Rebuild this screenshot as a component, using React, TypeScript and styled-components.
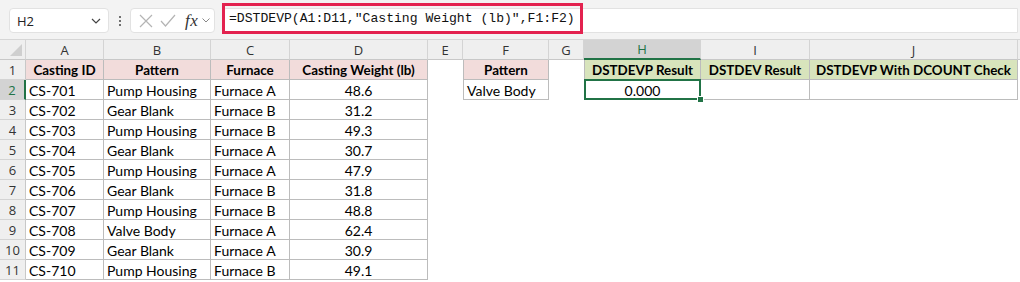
import styled, { createGlobalStyle } from 'styled-components';

const GlobalStyle = createGlobalStyle`
  html, body {
    margin: 0;
    padding: 0;
    background: #ffffff;
  }
  body {
    width: 1020px;
    height: 282px;
    overflow: hidden;
    font-family: "Lato", "Liberation Sans", sans-serif;
  }
`;

const GREEN = '#217346';
const LINE = '#bcbcbc';

const TopBar = styled.div`
  height: 40px;
  box-sizing: border-box;
  background: #f3f3f3;
  display: flex;
  align-items: flex-start;
  padding: 8px 2px 0 9px;
  border-bottom: 1px solid #d6d6d6;
`;

const Box = styled.div<{ $w?: number }>`
  height: 25px;
  width: ${p => (p.$w ? `${p.$w}px` : 'auto')};
  flex: ${p => (p.$w ? '0 0 auto' : '1 1 auto')};
  box-sizing: border-box;
  background: #ffffff;
  border: 1px solid #e2e2e2;
  border-radius: 4px;
  display: flex;
  align-items: center;
`;

const NameText = styled.span`
  font-family: "Open Sans", "Noto Sans", sans-serif;
  font-size: 13px;
  color: #222;
  padding-left: 7px;
  flex: 1;
`;

const Dots = styled.div`
  width: 21px;
  display: flex;
  flex-direction: column;
  align-items: center;
  justify-content: center;
  gap: 2px;
  height: 25px;
  span {
    width: 2px;
    height: 2px;
    background: #444;
    border-radius: 1px;
  }
`;

const Fx = styled.span`
  font-family: "Liberation Serif", serif;
  font-style: italic;
  font-size: 17px;
  color: #333;
  margin-left: 9px;
  letter-spacing: 0.5px;
`;

const FormulaBox = styled(Box)`
  margin-left: 7px;
  align-items: flex-start;
  overflow: visible;
  border-radius: 4px 0 0 4px;
`;

const Highlight = styled.div`
  margin-top: -6px;
  margin-left: -1px;
  height: 31px;
  box-sizing: border-box;
  border: 3px solid #e3224f;
  display: flex;
  align-items: center;
  padding: 0 5px 0 4px;
  font-family: "Liberation Mono", monospace;
  font-size: 13.1px;
  color: #111;
  white-space: pre;
`;

const Sheet = styled.div`
  display: grid;
  grid-template-columns: 26px 78px 107px 79px 138px 35px 86px 35px 117px 109px 208px 1fr;
  grid-auto-rows: 20px;
`;

const Corner = styled.div`
  background: #efefef;
  border-right: 1px solid #d4d4d4;
  border-bottom: 1px solid #c8c8c8;
  position: relative;
  box-sizing: border-box;
  &::after {
    content: '';
    position: absolute;
    right: 3px;
    bottom: 3px;
    border-left: 12px solid transparent;
    border-bottom: 12px solid #cfcfcf;
  }
`;

const ColHead = styled.div<{ $active?: boolean }>`
  box-sizing: border-box;
  background: ${p => (p.$active ? '#d3d3d3' : '#efefef')};
  color: ${p => (p.$active ? GREEN : '#333')};
  border-right: 1px solid #d4d4d4;
  border-bottom: ${p => (p.$active ? `2px solid ${GREEN}` : '1px solid #c8c8c8')};
  font-family: "Open Sans", "Noto Sans", sans-serif;
  font-size: 13px;
  display: flex;
  align-items: center;
  justify-content: center;
`;

const RowHead = styled.div<{ $active?: boolean }>`
  box-sizing: border-box;
  background: ${p => (p.$active ? '#d3d3d3' : '#efefef')};
  color: ${p => (p.$active ? GREEN : '#333')};
  border-right: ${p => (p.$active ? `2px solid ${GREEN}` : '1px solid #c8c8c8')};
  border-bottom: 1px solid #d4d4d4;
  font-family: "Open Sans", "Noto Sans", sans-serif;
  font-size: 13px;
  display: flex;
  align-items: center;
  justify-content: center;
`;

const Cell = styled.div<{
  $fill?: string;
  $bold?: boolean;
  $center?: boolean;
  $border?: boolean;
  $left?: boolean;
}>`
  box-sizing: border-box;
  background: ${p => p.$fill || '#ffffff'};
  font-weight: ${p => (p.$bold ? 700 : 400)};
  font-size: ${p => (p.$bold ? '13.4px' : '14px')};
  color: #000;
  display: flex;
  align-items: center;
  justify-content: ${p => (p.$center ? 'center' : 'flex-start')};
  padding: 1px 3px 0;
  white-space: nowrap;
  overflow: visible;
  border-right: ${p => (p.$border ? `1px solid ${LINE}` : 'none')};
  border-bottom: ${p => (p.$border ? `1px solid ${LINE}` : 'none')};
  border-left: ${p => (p.$left ? `1px solid ${LINE}` : 'none')};
`;

const Selected = styled(Cell)`
  position: relative;
  &::after {
    content: '';
    position: absolute;
    left: -1px;
    top: -1px;
    right: -1px;
    bottom: -1px;
    border: 2px solid ${GREEN};
  }
  &::before {
    content: '';
    position: absolute;
    right: -4px;
    bottom: -4px;
    width: 5px;
    height: 5px;
    background: ${GREEN};
    border: 1px solid #fff;
    z-index: 2;
  }
`;

const PINK = '#f2dcdb';
const LIME = '#d8e4bc';

const cols = ['A', 'B', 'C', 'D', 'E', 'F', 'G', 'H', 'I', 'J'];

const data = [
  ['CS-701', 'Pump Housing', 'Furnace A', '48.6'],
  ['CS-702', 'Gear Blank', 'Furnace B', '31.2'],
  ['CS-703', 'Pump Housing', 'Furnace B', '49.3'],
  ['CS-704', 'Gear Blank', 'Furnace A', '30.7'],
  ['CS-705', 'Pump Housing', 'Furnace A', '47.9'],
  ['CS-706', 'Gear Blank', 'Furnace B', '31.8'],
  ['CS-707', 'Pump Housing', 'Furnace B', '48.8'],
  ['CS-708', 'Valve Body', 'Furnace A', '62.4'],
  ['CS-709', 'Gear Blank', 'Furnace A', '30.9'],
  ['CS-710', 'Pump Housing', 'Furnace B', '49.1'],
];

const Chevron = () => (
  <svg width="10" height="6" viewBox="0 0 10 6">
    <path d="M1 1l4 4 4-4" fill="none" stroke="#444" strokeWidth="1.2" />
  </svg>
);

const FormulaBar = () => (
  <TopBar>
    <Box $w={100}>
      <NameText>H2</NameText>
      <span style={{ marginRight: 7, display: 'flex' }}>
        <Chevron />
      </span>
    </Box>
    <Dots>
      <span />
      <span />
      <span />
    </Dots>
    <Box $w={85}>
      <svg width="14" height="14" viewBox="0 0 14 14" style={{ marginLeft: 8 }}>
        <path d="M1 1l12 12M13 1L1 13" stroke="#b4b4b4" strokeWidth="1.2" fill="none" />
      </svg>
      <svg width="16" height="13" viewBox="0 0 16 13" style={{ marginLeft: 7 }}>
        <path d="M1 7l4.5 5L15 1" stroke="#b4b4b4" strokeWidth="1.2" fill="none" />
      </svg>
      <Fx>fx</Fx>
      <span style={{ marginLeft: 4, display: 'flex' }}>
        <svg width="8" height="5" viewBox="0 0 8 5">
          <path d="M0.5 0.5l3.5 3.5 3.5-3.5" fill="none" stroke="#888" strokeWidth="1" />
        </svg>
      </span>
    </Box>
    <FormulaBox>
      <Highlight>=DSTDEVP(A1:D11,"Casting Weight (lb)",F1:F2)</Highlight>
    </FormulaBox>
  </TopBar>
);

export default function App() {
  return (
    <>
      <GlobalStyle />
      <FormulaBar />
      <Sheet>
        <Corner />
        {cols.map(c => (
          <ColHead key={c} $active={c === 'H'}>
            {c}
          </ColHead>
        ))}
        <ColHead />

        <RowHead>1</RowHead>
        <Cell $fill={PINK} $bold $center $border>Casting ID</Cell>
        <Cell $fill={PINK} $bold $center $border>Pattern</Cell>
        <Cell $fill={PINK} $bold $center $border>Furnace</Cell>
        <Cell $fill={PINK} $bold $center $border>Casting Weight (lb)</Cell>
        <Cell />
        <Cell $fill={PINK} $bold $center $border $left>Pattern</Cell>
        <Cell />
        <Cell $fill={LIME} $bold $center $border $left>DSTDEVP Result</Cell>
        <Cell $fill={LIME} $bold $center $border>DSTDEV Result</Cell>
        <Cell $fill={LIME} $bold $center $border>DSTDEVP With DCOUNT Check</Cell>
        <Cell />

        {data.map((r, i) => (
          <Row key={r[0]} n={i + 2} r={r} />
        ))}
      </Sheet>
    </>
  );
}

const Row = ({ n, r }: { n: number; r: string[] }) => (
  <>
    <RowHead $active={n === 2}>{n}</RowHead>
    <Cell $border>{r[0]}</Cell>
    <Cell $border>{r[1]}</Cell>
    <Cell $border>{r[2]}</Cell>
    <Cell $border $center>{r[3]}</Cell>
    <Cell />
    {n === 2 ? <Cell $border $left>Valve Body</Cell> : <Cell />}
    <Cell />
    {n === 2 ? <Selected $border $left $center>0.000</Selected> : <Cell />}
    {n === 2 ? <Cell $border /> : <Cell />}
    {n === 2 ? <Cell $border /> : <Cell />}
    <Cell />
  </>
);
